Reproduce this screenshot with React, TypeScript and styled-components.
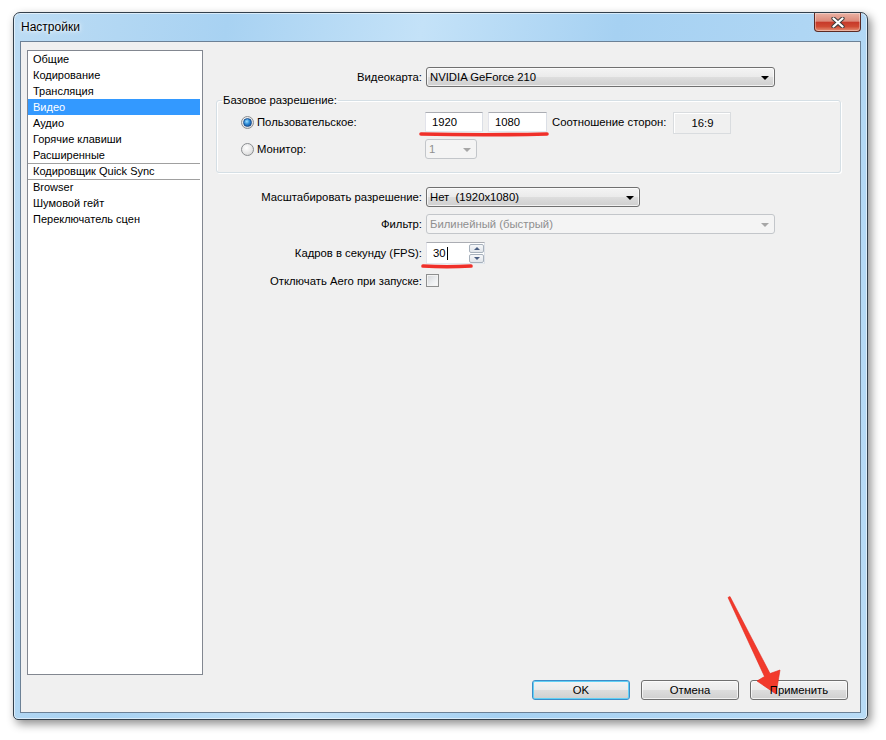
import React from "react";
import styled, { createGlobalStyle } from "styled-components";

const GlobalStyle = createGlobalStyle`
  html, body {
    margin: 0;
    padding: 0;
    background: #ffffff;
  }
  body {
    font-family: "Liberation Sans", Arial, sans-serif;
    font-size: 11px;
    color: #000;
  }
  * {
    box-sizing: border-box;
  }
`;

const Page = styled.div`
  position: relative;
  width: 886px;
  height: 740px;
  padding: 12px 0 0 13px;
  overflow: hidden;
`;

const Window = styled.div`
  width: 855px;
  height: 708px;
  border: 1px solid #33404c;
  border-radius: 7px 7px 5px 5px;
  background: linear-gradient(
    100deg,
    #bcdcf4 0%,
    #a8d2f2 22%,
    #c4e2f8 42%,
    #a6d1f2 62%,
    #b8dbf6 100%
  );
  box-shadow: 3px 4px 10px rgba(0, 0, 0, 0.45),
    inset 0 0 0 1px rgba(255, 255, 255, 0.55);
  display: flex;
  flex-direction: column;
  padding: 0 6px 6px;
`;

const TitleBar = styled.div`
  height: 28px;
  display: flex;
  align-items: flex-start;
`;

const Title = styled.div`
  align-self: center;
  margin-left: 1px;
  font-size: 12px;
  color: #000;
  text-shadow: 0 0 6px #fff, 0 0 3px #fff;
`;

const CloseButton = styled.div`
  margin-left: auto;
  width: 47px;
  height: 19px;
  border: 1px solid #5b2a24;
  border-top: none;
  border-radius: 0 0 4px 4px;
  background: linear-gradient(
    #eab2a4 0%,
    #dc8a7a 45%,
    #c73a2a 52%,
    #cf4a33 75%,
    #e59277 100%
  );
  box-shadow: inset 0 0 0 1px rgba(255, 255, 255, 0.35);
  display: flex;
  align-items: center;
  justify-content: center;
`;

const Client = styled.div`
  flex: 1;
  border: 1px solid #6c8196;
  background: #f0f0f0;
  display: flex;
  flex-direction: column;
  padding: 8px 12px 12px 6px;
`;

const Body = styled.div`
  flex: 1;
  display: flex;
  min-height: 0;
`;

const NavList = styled.ul`
  width: 176px;
  margin: 0;
  padding: 0 2px 0 0;
  list-style: none;
  background: #fff;
  border: 1px solid #828790;
`;

const NavItem = styled.li<{ $active?: boolean; $divider?: boolean }>`
  height: 16px;
  line-height: ${(p) => (p.$divider ? 15 : 16)}px;
  padding-left: 5px;
  white-space: nowrap;
  background: ${(p) => (p.$active ? "#3399ff" : "transparent")};
  color: ${(p) => (p.$active ? "#fff" : "#000")};
  border-top: ${(p) => (p.$divider ? "1px solid #a0a0a0" : "none")};
`;

const Panel = styled.div`
  flex: 1;
  margin-left: 13px;
  padding-top: 17px;
  display: flex;
  flex-direction: column;
`;

const FormRow = styled.div<{ $top?: number; $h?: number }>`
  display: grid;
  grid-template-columns: 206px auto;
  column-gap: 4px;
  align-items: center;
  justify-items: start;
  margin-top: ${(p) => p.$top ?? 0}px;
  height: ${(p) => p.$h ?? 20}px;
`;

const Label = styled.span`
  justify-self: end;
  white-space: nowrap;
  font-size: 11.3px;
`;

const Group = styled.fieldset`
  width: 625px;
  margin: 7px 0 0 0;
  padding: 0 0 13px 0;
  border: 1px solid #d5dfe5;
  border-radius: 3px;
  box-shadow: inset 1px 1px 0 #fff, 1px 1px 0 #fff;
  min-width: 0;
`;

const Legend = styled.legend`
  margin-left: 5px;
  padding: 0 1px;
  line-height: 12px;
  font-size: 11.3px;
`;

const GroupRow = styled.div<{ $top: number }>`
  display: grid;
  grid-template-columns: 184px auto;
  align-items: start;
  margin-top: ${(p) => p.$top}px;
  padding-left: 24px;
  height: 20px;
`;

const RadioLabel = styled.div`
  display: flex;
  align-items: center;
  gap: 3px;
  height: 20px;
  white-space: nowrap;
  font-size: 11.3px;
`;

const Radio = styled.span<{ $checked?: boolean }>`
  width: 13px;
  height: 13px;
  border-radius: 50%;
  border: 1px solid #8a8d90;
  background: radial-gradient(circle at 40% 35%, #ffffff 0%, #e4e4e4 60%, #c9c9c9 100%);
  display: flex;
  align-items: center;
  justify-content: center;
  &::after {
    content: "";
    display: ${(p) => (p.$checked ? "block" : "none")};
    width: 7px;
    height: 7px;
    border-radius: 50%;
    background: radial-gradient(circle at 40% 35%, #9fe0ff 0%, #2b8ad6 45%, #0d3f86 100%);
    border: 1px solid #1a4e8e;
  }
`;

const Controls = styled.div`
  display: flex;
  align-items: flex-start;
  gap: 5px;
`;

const TextBox = styled.div<{ $w: number; $h?: number }>`
  width: ${(p) => p.$w}px;
  height: ${(p) => p.$h ?? 20}px;
  background: #fff;
  border: 1px solid;
  border-color: #abadb3 #dbdfe6 #e3e9ef #e2e3ea;
  display: flex;
  align-items: center;
  padding-left: 6px;
  position: relative;
  font-size: 11.3px;
`;

const AspectBox = styled.div`
  width: 58px;
  height: 22px;
  margin-left: 2px;
  border: 1px solid #d9dcdf;
  box-shadow: inset 1px 1px 0 #fff;
  background: #f0f0f0;
  display: flex;
  align-items: center;
  justify-content: center;
  font-size: 11.3px;
`;

const InlineLabel = styled.span`
  height: 20px;
  line-height: 20px;
  white-space: nowrap;
  font-size: 11.3px;
`;

const Combo = styled.div<{ $w: number; $disabled?: boolean }>`
  width: ${(p) => p.$w}px;
  height: 20px;
  border: 1px solid ${(p) => (p.$disabled ? "#c3c6ca" : "#707070")};
  border-radius: 3px;
  background: ${(p) =>
    p.$disabled
      ? "#f4f4f4"
      : "linear-gradient(#f4f4f4 0%, #ebebeb 48%, #dddddd 52%, #cfcfcf 100%)"};
  box-shadow: ${(p) => (p.$disabled ? "none" : "inset 0 0 0 1px rgba(255,255,255,0.7)")};
  color: ${(p) => (p.$disabled ? "#8f8f8f" : "#000")};
  display: flex;
  align-items: center;
  padding: 0 5px 0 3px;
  white-space: pre;
  font-size: 11.3px;
`;

const ComboText = styled.span`
  flex: 1;
`;

const Arrow = styled.span<{ $disabled?: boolean }>`
  width: 0;
  height: 0;
  border-left: 4px solid transparent;
  border-right: 4px solid transparent;
  border-top: 4px solid ${(p) => (p.$disabled ? "#a6a6a6" : "#000")};
  margin-top: 1px;
`;

const Caret = styled.span`
  width: 1px;
  height: 13px;
  background: #000;
  margin-left: 1px;
`;

const Spin = styled.div`
  position: absolute;
  right: 0;
  top: 1px;
  display: flex;
  flex-direction: column;
  gap: 1px;
`;

const SpinButton = styled.div<{ $up?: boolean }>`
  width: 15px;
  height: 9px;
  border: 1px solid #a7b1bc;
  border-radius: 2px;
  background: linear-gradient(#f7f8fa, #e1e5ea);
  display: flex;
  align-items: center;
  justify-content: center;
  &::after {
    content: "";
    border-left: 3px solid transparent;
    border-right: 3px solid transparent;
    ${(p) =>
      p.$up ? "border-bottom: 3px solid #4b5f82;" : "border-top: 3px solid #4b5f82;"}
  }
`;

const Checkbox = styled.span`
  width: 13px;
  height: 13px;
  border: 1px solid #8e8f8f;
  background: linear-gradient(135deg, #d3d5d8 0%, #eef0f2 60%, #fbfbfb 100%);
  box-shadow: inset 0 0 0 1px #f3f3f3;
`;

const Footer = styled.div`
  margin-top: 5px;
  display: flex;
  justify-content: flex-end;
  gap: 11px;
`;

const Button = styled.button<{ $default?: boolean }>`
  width: 98px;
  height: 20px;
  padding: 0;
  font-family: "Liberation Sans", Arial, sans-serif;
  font-size: 11.3px;
  color: #000;
  border: 1px solid ${(p) => (p.$default ? "#3c8dc9" : "#707070")};
  border-radius: 3px;
  background: linear-gradient(#f3f3f3 0%, #ebebeb 48%, #dddddd 52%, #cfcfcf 100%);
  box-shadow: inset 0 0 0 1px
    ${(p) => (p.$default ? "#62d0f5" : "rgba(255,255,255,0.7)")};
`;

/* button captions sit above the annotation layer, as in the reference */
const Caption = styled.span`
  position: relative;
  z-index: 2;
`;

const Marks = styled.svg`
  position: absolute;
  left: 0;
  top: 0;
  z-index: 1;
  pointer-events: none;
`;

const items = [
  "Общие",
  "Кодирование",
  "Трансляция",
  "Видео",
  "Аудио",
  "Горячие клавиши",
  "Расширенные",
  "Кодировщик Quick Sync",
  "Browser",
  "Шумовой гейт",
  "Переключатель сцен",
];

const CloseGlyph = () => (
  <svg width="14" height="11" viewBox="0 0 14 11">
    <path d="M2.5 1.5 L11.5 9.5 M11.5 1.5 L2.5 9.5" stroke="#3b3b3b" strokeWidth="4.2" strokeLinecap="round" />
    <path d="M2.5 1.5 L11.5 9.5 M11.5 1.5 L2.5 9.5" stroke="#ffffff" strokeWidth="2.3" strokeLinecap="round" />
  </svg>
);

export default function App() {
  return (
    <Page>
      <GlobalStyle />
      <Window>
        <TitleBar>
          <Title>Настройки</Title>
          <CloseButton>
            <CloseGlyph />
          </CloseButton>
        </TitleBar>
        <Client>
          <Body>
            <NavList>
              {items.map((name, i) => (
                <NavItem key={name} $active={i === 3} $divider={i === 7 || i === 8}>
                  {name}
                </NavItem>
              ))}
            </NavList>
            <Panel>
              <FormRow>
                <Label>Видеокарта:</Label>
                <Combo $w={349}>
                  <ComboText>NVIDIA GeForce 210</ComboText>
                  <Arrow />
                </Combo>
              </FormRow>

              <Group>
                <Legend>Базовое разрешение:</Legend>
                <GroupRow $top={6}>
                  <RadioLabel>
                    <Radio $checked />
                    Пользовательское:
                  </RadioLabel>
                  <Controls>
                    <TextBox $w={58}>1920</TextBox>
                    <TextBox $w={59}>1080</TextBox>
                    <InlineLabel>Соотношение сторон:</InlineLabel>
                    <AspectBox>16:9</AspectBox>
                  </Controls>
                </GroupRow>
                <GroupRow $top={7}>
                  <RadioLabel>
                    <Radio />
                    Монитор:
                  </RadioLabel>
                  <Combo $w={52} $disabled>
                    <ComboText>1</ComboText>
                    <Arrow $disabled />
                  </Combo>
                </GroupRow>
              </Group>

              <FormRow $top={14}>
                <Label>Масштабировать разрешение:</Label>
                <Combo $w={214}>
                  <ComboText>Нет  (1920x1080)</ComboText>
                  <Arrow />
                </Combo>
              </FormRow>
              <FormRow $top={7}>
                <Label>Фильтр:</Label>
                <Combo $w={349} $disabled>
                  <ComboText>Билинейный (быстрый)</ComboText>
                  <Arrow $disabled />
                </Combo>
              </FormRow>
              <FormRow $top={8} $h={22}>
                <Label>Кадров в секунду (FPS):</Label>
                <TextBox $w={59} $h={22}>
                  30
                  <Caret />
                  <Spin>
                    <SpinButton $up />
                    <SpinButton />
                  </Spin>
                </TextBox>
              </FormRow>
              <FormRow $top={10} $h={13}>
                <Label>Отключать Aero при запуске:</Label>
                <Checkbox />
              </FormRow>
            </Panel>
          </Body>
          <Footer>
            <Button $default>
              <Caption>OK</Caption>
            </Button>
            <Button>
              <Caption>Отмена</Caption>
            </Button>
            <Button>
              <Caption>Применить</Caption>
            </Button>
          </Footer>
        </Client>
      </Window>

      <Marks width="886" height="740" viewBox="0 0 886 740">
        <path d="M421 134 Q484 135.5 547 134" stroke="#f0302a" strokeWidth="3.6" strokeLinecap="round" fill="none" />
        <path d="M423 266 Q447 267.5 471 266" stroke="#f0302a" strokeWidth="3.6" strokeLinecap="round" fill="none" />
        <polygon
          points="730,596.5 770,673.5 780,670 776,694 757,681 764.5,676.5 728,597.5"
          fill="#f23a2c"
          stroke="#e0281e"
          strokeWidth="0.6"
          strokeLinejoin="round"
        />
      </Marks>
    </Page>
  );
}
